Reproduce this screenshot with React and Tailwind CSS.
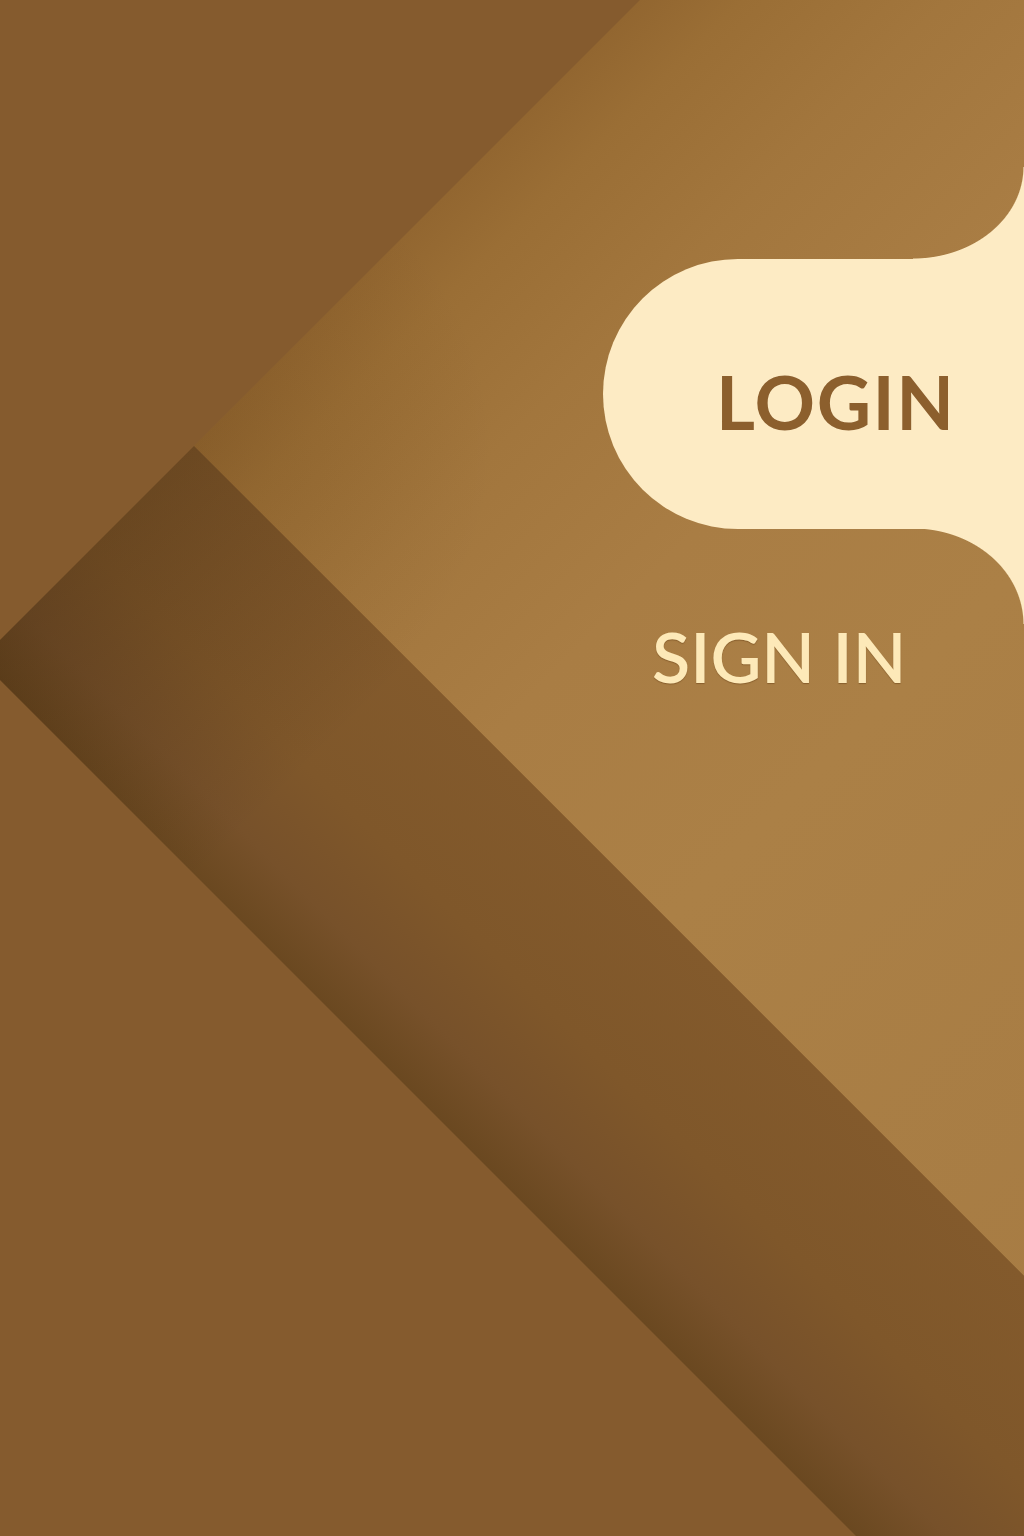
export default function App() {
  return (
    <div className="relative w-[1024px] h-[1536px] overflow-hidden bg-[#855b2e] font-['Lato','Open_Sans',sans-serif]">
      {/* light diagonal region */}
      <div
        className="absolute inset-0 [clip-path:polygon(640px_0,1024px_0,1024px_1276px,194px_446px)] bg-[radial-gradient(circle_300px_at_194px_446px,rgba(80,48,12,0.16),transparent),linear-gradient(135deg,#926630_25%,#9a6e35_29%,#a2763d_37%,#a97d44_48%,#ab8046_62%,#a67b43_100%)]"
      />
      {/* dark diagonal band */}
      <div
        className="absolute inset-0 [clip-path:polygon(194px_446px,1024px_1276px,1024px_1536px,856px_1536px,0_680px,0_640px)] bg-[linear-gradient(135deg,rgba(40,22,4,0.26)_25%,rgba(40,22,4,0)_42%),linear-gradient(225deg,#835a2c_49.8%,#7f572a_58%,#77512a_63%,#6a4820_66.6%)]"
      />

      {/* cream tab + labels */}
      <div className="absolute inset-0 flex justify-end pt-[167px]">
        <div className="flex w-[421px] flex-col">
          <div className="self-end h-[92px] w-[111px] bg-[radial-gradient(111px_92px_at_0_0,transparent_99%,#fdebc4_100%)]" />
          <div className="flex h-[270px] w-[421px] items-center rounded-l-[135px] bg-[#fdebc4] pl-[113px] pt-[14px]">
            <span className="text-[75px] leading-none font-bold tracking-[1.5px] text-[#8c5f2d] [text-shadow:0_0_1px_rgba(255,245,220,0.6)]">LOGIN</span>
          </div>
          <div className="-mt-px flex w-full items-start justify-between">
            <span className="ml-[49px] mt-[93px] text-[70px] leading-none font-semibold text-[#fde9b8] [text-shadow:0_1px_1px_rgba(110,70,25,0.55)]">
              SIGN IN
            </span>
            <div className="h-[96px] w-[111px] bg-[radial-gradient(111px_96px_at_0_100%,transparent_99%,#fdebc4_100%)]" />
          </div>
        </div>
      </div>
    </div>
  );
}
